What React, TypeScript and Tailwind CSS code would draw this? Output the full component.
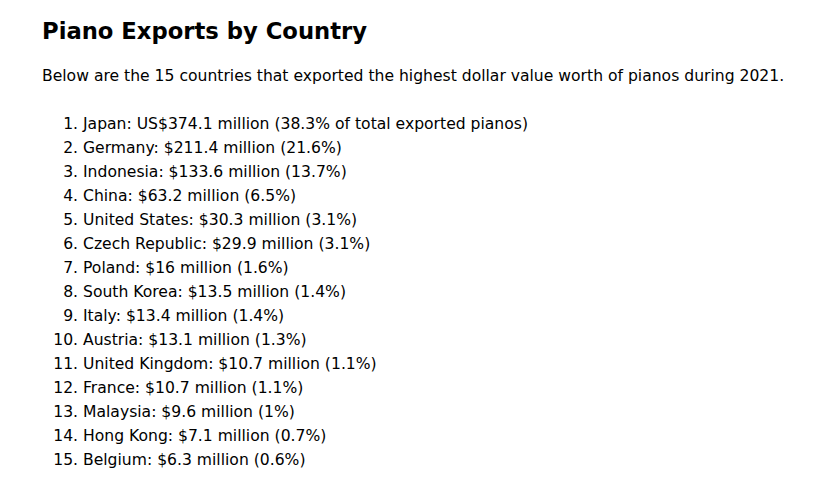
import React from "react";

const items = [
  "Japan: US$374.1 million (38.3% of total exported pianos)",
  "Germany: $211.4 million (21.6%)",
  "Indonesia: $133.6 million (13.7%)",
  "China: $63.2 million (6.5%)",
  "United States: $30.3 million (3.1%)",
  "Czech Republic: $29.9 million (3.1%)",
  "Poland: $16 million (1.6%)",
  "South Korea: $13.5 million (1.4%)",
  "Italy: $13.4 million (1.4%)",
  "Austria: $13.1 million (1.3%)",
  "United Kingdom: $10.7 million (1.1%)",
  "France: $10.7 million (1.1%)",
  "Malaysia: $9.6 million (1%)",
  "Hong Kong: $7.1 million (0.7%)",
  "Belgium: $6.3 million (0.6%)",
];

export default function App() {
  return (
    <div className="min-h-[490px] bg-white pl-[42px] pr-[10px] pt-[15px] text-black" style={{ fontFamily: '"DejaVu Sans", Verdana, sans-serif' }}>
      <h1 className="text-[22.7px] font-bold leading-[32px]">Piano Exports by Country</h1>
      <p className="mt-[17px] whitespace-nowrap text-[15.6px] leading-[24px]">
        Below are the 15 countries that exported the highest dollar value worth of pianos during 2021.
      </p>
      <ol className="mt-[24px] list-decimal pl-[41px] text-[15.6px] leading-[24px]">
        {items.map((t) => (
          <li key={t}>{t}</li>
        ))}
      </ol>
    </div>
  );
}
